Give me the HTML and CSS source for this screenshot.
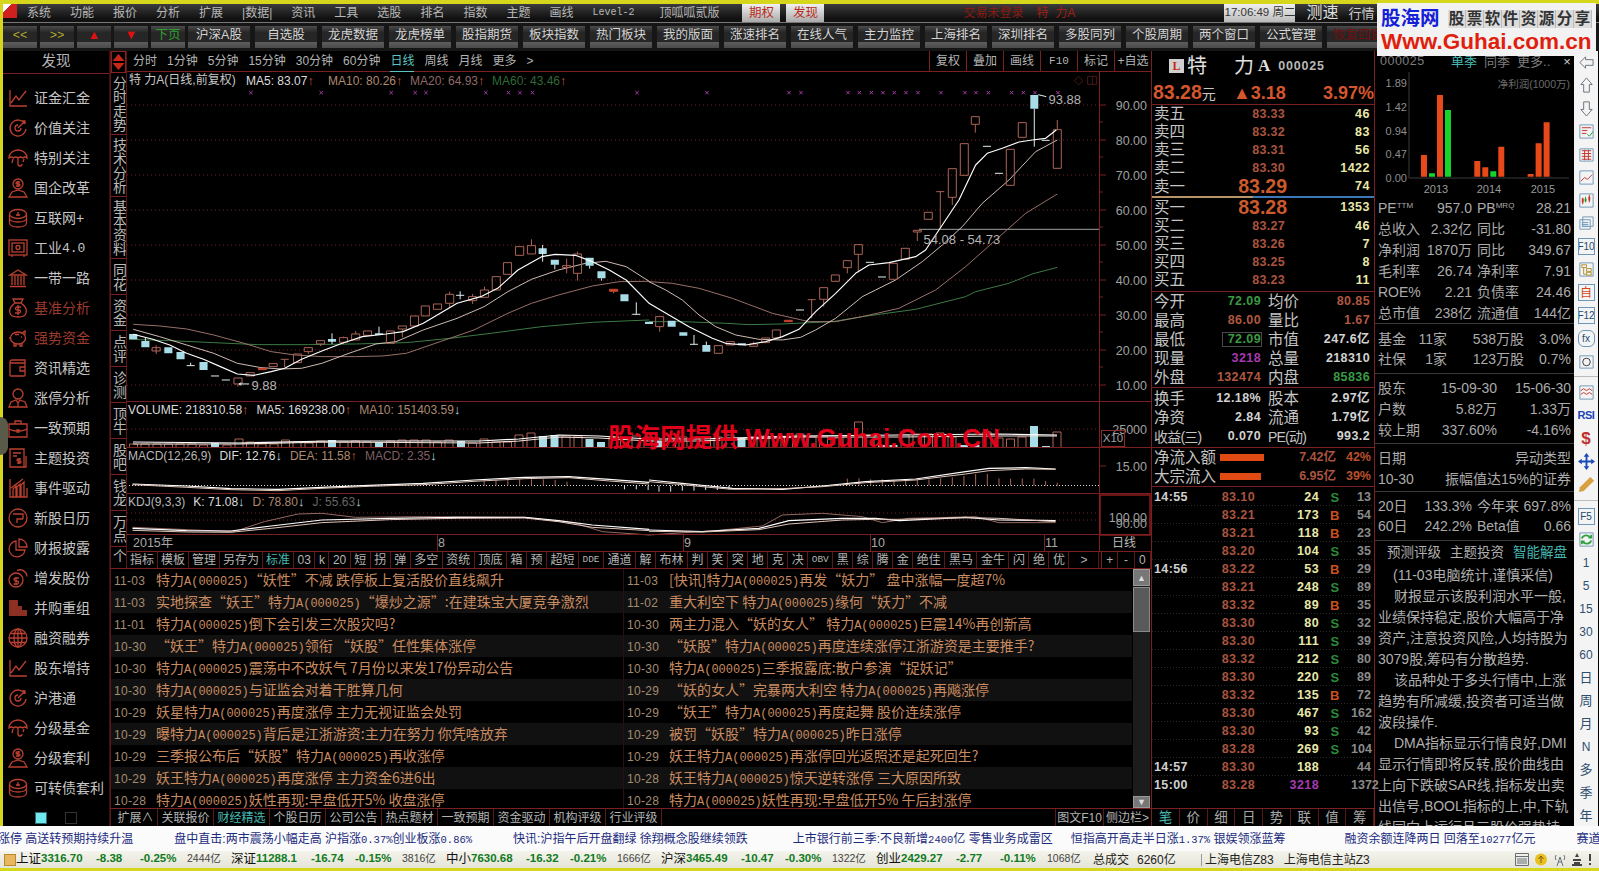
FILE: index.html
```html
<!DOCTYPE html>
<html lang="zh-CN">
<head>
<meta charset="utf-8">
<title>特力A 000025</title>
<link rel="stylesheet" href="styles.css">
</head>
<body>
<svg class="defs" width="0" height="0">
  <symbol id="i-lc" viewBox="0 0 20 20"><path d="M2 2V18H19M3 15L8 8L11 12L18 3"/></symbol>
  <symbol id="i-tg" viewBox="0 0 20 20"><path d="M17 6A8 8 0 1 0 18 11M13 10a3 3 0 1 1-3-3M10 10L17 3M14 3h3v3"/></symbol>
  <symbol id="i-um" viewBox="0 0 20 20"><path d="M1 10a9 8 0 0 1 18 0q-2-2-4.500 0q-2-2-4.500 0q-2-2-4.500 0q-2-2-4.500 0zM10 10v6a2 2 0 0 0 4 0M5 11l-1 4M16 11l-1 3"/></symbol>
  <symbol id="i-pd" viewBox="0 0 20 20"><circle cx="10" cy="6" r="5"/><path d="M1 19l3-5 6-2 6 2 3 5zM8 8h3a1 1 0 0 0 0-2H9a1 1 0 0 1 0-2h3M10 3v6"/></symbol>
  <symbol id="i-co" viewBox="0 0 20 20"><ellipse cx="10" cy="6" rx="8.500" ry="4.500"/><path d="M1.500 6v9c0 2.500 4 4 8.500 4s8.500-1.500 8.500-4V6M1.500 10c0 2.500 4 4 8.500 4s8.500-1.500 8.500-4M8 7h4M10 4v4"/></symbol>
  <symbol id="i-sf" viewBox="0 0 20 20"><rect x="1" y="2" width="18" height="15"/><rect x="4" y="5" width="12" height="9"/><circle cx="10" cy="9.500" r="2"/><path d="M4 17v2M16 17v2"/></symbol>
  <symbol id="i-bk" viewBox="0 0 20 20"><path d="M2 7L10 2L18 7zM4 8v9M7 8v9M10 8v9M13 8v9M16 8v9M2 18.500H18"/></symbol>
  <symbol id="i-bg" viewBox="0 0 20 20"><path d="M7 5L5 1h10l-2 4zM7 5C3 8 1 12 2 15c.5 3 3 4 8 4s7.500-1 8-4c1-3-1-7-5-10zM13 9H9a1.500 1.500 0 0 0 0 3h2a1.500 1.500 0 0 1 0 3H7M10 7v10"/></symbol>
  <symbol id="i-pg" viewBox="0 0 20 20"><ellipse cx="10" cy="10" rx="7.500" ry="6"/><path d="M14 5l3-2v4M2.500 10H1M6 15v3h2v-2M12 16v2h2v-3M13 9h1M7 6.500h4"/></symbol>
  <symbol id="i-wl" viewBox="0 0 20 20"><path d="M2 4a2 2 0 0 1 2-2h13v15a1 1 0 0 1-1 1H3a1 1 0 0 1-1-1zM2 5h15M12 9h5v4h-5z"/></symbol>
  <symbol id="i-pr" viewBox="0 0 20 20"><circle cx="10" cy="6" r="5"/><path d="M1 19l2-5 5-2 2 3 2-3 5 2 2 5zM10 15v4"/></symbol>
  <symbol id="i-bc" viewBox="0 0 20 20"><path d="M1 6h18v13H1zM7 6V3h6v3M1 11c5 3 13 3 18 0M9 12h2v2H9z"/></symbol>
  <symbol id="i-dc" viewBox="0 0 20 20"><path d="M2 1h14v18H2zM5 5h8M5 8h4M18 8v11h-2M13 11h-3a1 1 0 0 0 0 2h2a1 1 0 0 1 0 2H9M11 10v6"/></symbol>
  <symbol id="i-br" viewBox="0 0 20 20"><path d="M2 1V19H19V10M5 19V11l3-3v11M9 19V9l3-3v13M13 19V7l3-3v15M3 10L15 1"/></symbol>
  <symbol id="i-cl" viewBox="0 0 20 20"><circle cx="10" cy="10" r="9"/><path d="M5 6h10v5M15 11H9v4"/></symbol>
  <symbol id="i-pi" viewBox="0 0 20 20"><path d="M8 3a8 8 0 1 0 9 9H8zM11 1a8 8 0 0 1 8 8h-8z"/></symbol>
  <symbol id="i-c2" viewBox="0 0 20 20"><circle cx="8" cy="12" r="7"/><path d="M9 2.500a7 7 0 0 1 10 6M11 10H7.500a1 1 0 0 0 0 3h1.500a1 1 0 0 1 0 3H5.500M8 9v8"/></symbol>
  <symbol id="i-st" viewBox="0 0 20 20"><path d="M1 3h9M1 5h9M1 7h9M1 9h13M1 11h13M1 13h18M1 15h18M1 17h18"/></symbol>
  <symbol id="i-gl" viewBox="0 0 20 20"><circle cx="10" cy="10" r="9"/><ellipse cx="10" cy="10" rx="4" ry="9"/><path d="M1 10h18M2.500 5.500h15M2.500 14.500h15M10 1v18"/></symbol>
</svg>

<div class="topedge"></div>
<div class="framed">
  <header class="menubar">
    <span class="logo"></span>
    <span class="mi">系统</span><span class="mi">功能</span><span class="mi">报价</span><span class="mi">分析</span><span class="mi">扩展</span><span class="mi">|数据|</span><span class="mi">资讯</span><span class="mi">工具</span><span class="mi">选股</span><span class="mi">排名</span><span class="mi">指数</span><span class="mi">主题</span><span class="mi">画线</span><span class="mi mono">Level-2</span><span class="mi wide">顶呱呱贰版</span>
    <span class="mbox first">期权</span><span class="mbox">发现</span>
    <span class="alert">交易未登录</span><span class="alert a2">特&nbsp;&nbsp;力A</span>
    <span class="clock">17:06:49 周二</span><span class="speed">测速</span><span class="hq">行情</span>
  </header>

  <nav class="toolbar">
    <span class="tb tb-s y">&lt;&lt;</span><span class="tb tb-s y">&gt;&gt;</span><span class="tb tb-s red">▲</span><span class="tb tb-s red">▼</span><span class="tb tb-s g">下页</span>
    <span class="tb">沪深A股</span><span class="tb">自选股</span><span class="tb">龙虎数据</span><span class="tb">龙虎榜单</span><span class="tb">股指期货</span><span class="tb">板块指数</span><span class="tb">热门板块</span><span class="tb">我的版面</span><span class="tb">涨速排名</span><span class="tb">在线人气</span><span class="tb">主力监控</span><span class="tb">上海排名</span><span class="tb">深圳排名</span><span class="tb">多股同列</span><span class="tb">个股周期</span><span class="tb">两个窗口</span><span class="tb">公式管理</span><span class="tb dim">恢复四窗</span>
  </nav>

  <main class="main">
    <aside class="sidebar">
      <div class="side-title">发现</div>
      <ul class="side-list">
        <li><svg class="si"><use href="#i-lc"/></svg>证金汇金</li>
        <li><svg class="si"><use href="#i-tg"/></svg>价值关注</li>
        <li><svg class="si"><use href="#i-um"/></svg>特别关注</li>
        <li><svg class="si"><use href="#i-pd"/></svg>国企改革</li>
        <li><svg class="si"><use href="#i-co"/></svg>互联网+</li>
        <li><svg class="si"><use href="#i-sf"/></svg>工业<span class="mono14">4.0</span></li>
        <li><svg class="si"><use href="#i-bk"/></svg>一带一路</li>
        <li class="hot"><svg class="si"><use href="#i-bg"/></svg>基准分析</li>
        <li class="hot"><svg class="si"><use href="#i-pg"/></svg>强势资金</li>
        <li><svg class="si"><use href="#i-wl"/></svg>资讯精选</li>
        <li><svg class="si"><use href="#i-pr"/></svg>涨停分析</li>
        <li><svg class="si"><use href="#i-bc"/></svg>一致预期</li>
        <li><svg class="si"><use href="#i-dc"/></svg>主题投资</li>
        <li><svg class="si"><use href="#i-br"/></svg>事件驱动</li>
        <li><svg class="si"><use href="#i-cl"/></svg>新股日历</li>
        <li><svg class="si"><use href="#i-pi"/></svg>财报披露</li>
        <li><svg class="si"><use href="#i-c2"/></svg>增发股份</li>
        <li><svg class="si"><use href="#i-st"/></svg>并购重组</li>
        <li><svg class="si"><use href="#i-gl"/></svg>融资融券</li>
        <li><svg class="si"><use href="#i-lc"/></svg>股东增持</li>
        <li><svg class="si"><use href="#i-tg"/></svg>沪港通</li>
        <li><svg class="si"><use href="#i-um"/></svg>分级基金</li>
        <li><svg class="si"><use href="#i-pd"/></svg>分级套利</li>
        <li><svg class="si"><use href="#i-co"/></svg>可转债套利</li>
      </ul>
      <div class="side-pages"><span class="pg on"></span><span class="pg"></span></div>
    </aside>

    <section class="work">
      <div class="work-top">
        <div class="vtabs">
          <div class="vt-arrows"><span class="va up"></span><span class="va down"></span></div>
          <div class="vt">分时走势</div><div class="vt">技术分析</div><div class="vt">基本资料</div><div class="vt vt-s">同花</div><div class="vt vt-s">资金</div><div class="vt vt-s">点评</div><div class="vt vt-s">诊测</div><div class="vt vt-s">顶牛</div><div class="vt vt-s">股吧</div><div class="vt vt-s">钱龙</div><div class="vt vt-s">万点</div><div class="vt vt-e">个</div>
        </div>
        <div class="chart">
          <div class="periods">
            <span>分时</span><span>1分钟</span><span>5分钟</span><span>15分钟</span><span>30分钟</span><span>60分钟</span><span class="cur">日线</span><span>周线</span><span>月线</span><span>更多</span><span>&gt;</span>
            <div class="tools"><span>复权</span><span>叠加</span><span>画线</span><span class="f10">F10</span><span>标记</span><span>+自选</span></div>
          </div>
          <div class="canvas">
            <svg class="plot" viewBox="128 72 1024 479" width="1024" height="479">
              <!-- grid & axes -->
              <path class="grid" d="M128 105H1100M128 140H1100M128 175H1100M128 210H1100M128 245H1100M128 280H1100M128 315H1100M128 350H1100M128 385H1100M128 429H1100M128 513H1100M128 520H1100"/>
              <path class="axis" d="M1100.500 72V551M1100 105h7M1100 140h7M1100 175h7M1100 210h7M1100 245h7M1100 280h7M1100 315h7M1100 350h7M1100 385h7M1100 122h4M1100 157h4M1100 192h4M1100 227h4M1100 262h4M1100 297h4M1100 332h4M1100 367h4M1100 466h7"/>
              <g class="ylab">
                <text x="1148" y="110">90.00</text><text x="1148" y="145">80.00</text><text x="1148" y="180">70.00</text><text x="1148" y="215">60.00</text><text x="1148" y="250">50.00</text><text x="1148" y="285">40.00</text><text x="1148" y="320">30.00</text><text x="1148" y="355">20.00</text><text x="1148" y="390">10.00</text>
                <text x="1148" y="434">25000</text><text x="1148" y="471">15.00</text><text x="1148" y="522">100.00</text><text x="1148" y="528">90.00</text>
              </g>
              <rect class="xten" x="1102.500" y="430.500" width="23" height="16"/><text class="xtt" x="1114" y="442">X10</text>
              <rect class="kbox" x="1101" y="495" width="50" height="40"/>

              <!-- left half, reference crop coordinates -->
              <g transform="translate(120 70) scale(.3381 .3333)">
                <path class="ma60" d="M30 808 150 812 280 818 410 824 560 824 700 822 850 818 980 805 1100 790 1250 770 1400 757 1568 750"/>
                <path class="ma20" d="M42 763 120 768 200 777 280 795 370 820 450 845 520 855 600 860 700 860 780 858 850 850 950 815 1050 780 1150 730 1220 700 1300 675 1400 648 1480 635 1568 634"/>
                <path class="ma10" d="M42 778 120 800 200 825 280 850 350 880 420 893 480 897 540 895 600 880 680 850 760 822 820 815 900 780 1000 745 1080 710 1150 665 1220 628 1300 600 1380 580 1440 574 1500 590 1568 634"/>
                <path class="cu" d="M98 833h24V843h-24zM110 826V852M340 924h24V942h-24zM352 942V950M376 908h24V918h-24zM444 881h24V890h-24zM478 868h24M490 868V892M516 852h24V878h-24zM548 833h24V845h-24zM560 845V852M584 812h24V822h-24zM596 822V828M652 803h24V817h-24zM664 800V803M664 817V822M688 792h24V810h-24zM700 783V792M723 783h24V796h-24zM791 783h24V820h-24zM826 768h24V777h-24zM838 777V802M862 738h24V768h-24zM894 708h24V738h-24zM930 702h24V718h-24zM966 673h24V700h-24zM978 665V673M978 700V712M1034 680h24V692h-24zM1046 672V680M1046 692V702M1069 660h24V682h-24zM1081 650V660M1104 620h24V660h-24zM1137 578h24V613h-24zM1173 530h24V556h-24zM1208 527h24V552h-24zM1220 508V527M1312 587h24V593h-24zM1324 566V610M1344 552h24V610h-24zM1356 545V552M1356 610V632M1463 664V670"/>
                <path class="cr" d="M412 895h24V899h-24zM1451 658h24V664h-24z"/>
                <path class="cd" d="M30 792h24V808h-24zM66 813h24V832h-24zM134 832h24V850h-24zM170 846h24V868h-24zM238 876h24V900h-24zM618 807h24V815h-24zM757 790h24V795h-24zM1241 535h24V552h-24zM1277 569h24V584h-24zM1380 563h24V587h-24zM1415 604h24V625h-24zM1483 673h24V694h-24z"/>
                <path class="cw" d="M78 803V813M212 878V887M200 887h24M272 918h24M304 930h24M630 790V822M769 770V795M1009 664V688M997 676h24M1253 525V575M1289 584V598M1392 587V596M1427 625V632M1530 697V733M1518 733h24M355 942h30M355 942l7-4M355 942l7 4"/>
                <path class="ma5" d="M42 793 100 808 150 825 200 850 250 868 300 890 350 912 400 916 450 905 490 895 540 868 600 843 660 820 720 800 790 792 840 785 900 760 950 730 1000 700 1070 680 1120 655 1180 600 1250 560 1290 553 1350 556 1400 575 1450 600 1500 630 1568 700"/>
                <path class="star" d="M385 63l10 10m0-10l-10 10M593 63l10 10m0-10l-10 10M800 63l10 10m0-10l-10 10M871 63l10 10m0-10l-10 10M903 63l10 10m0-10l-10 10M1080 63l10 10m0-10l-10 10M1147 63l10 10m0-10l-10 10M1181 63l10 10m0-10l-10 10M1218 63l10 10m0-10l-10 10M1527 63l10 10m0-10l-10 10"/>
              </g>

              <!-- right half -->
              <g transform="translate(650 70) scale(.3333)">
                <path class="hline" d="M810 478H1350"/>
                <path class="ma60" d="M0 755 100 755 230 760 300 764 400 762 550 755 640 740 800 718 950 680 980 665 1080 640 1150 612 1225 592"/>
                <path class="ma20" d="M0 635 70 640 150 655 250 685 370 730 480 755 560 755 640 740 750 715 860 660 950 590 1040 510 1130 430 1225 372"/>
                <path class="ma10" d="M0 635 50 660 100 690 150 735 200 770 260 795 330 808 400 810 455 802 500 780 560 745 640 680 740 630 820 575 880 525 940 470 1000 400 1080 330 1160 245 1225 210"/>
                <path class="cu" d="M20 740h24V770h-24zM32 770V785M196 827h24V850h-24zM232 815h24V825h-24zM302 822h24V829h-24zM314 815V822M338 804h24V818h-24zM370 780h24V804h-24zM476 689h24M488 689V745M512 653h24V688h-24zM524 688V710M547 615h24V634h-24zM583 572h24V593h-24zM595 593V610M616 524h24V553h-24zM628 553V607M721 580h24V628h-24zM757 535h24V568h-24zM793 481h24V486h-24zM805 486V513M826 427h24V448h-24zM862 365h24M874 365V475M898 296h24V382h-24zM910 382V405M934 221h24V316h-24zM967 140h24V163h-24zM979 163V188M1072 238h24V346h-24zM1108 158h24V202h-24zM1213 179h24V295h-24zM1225 150V179"/>
                <path class="cr" d="M406 751h24V755h-24z"/>
                <path class="cd" d="M-12 755h24V762h-24zM56 752h24V770h-24zM91 787h24V797h-24zM160 825h24V845h-24zM267 820h24V826h-24zM1144 75h24V116h-24z"/>
                <path class="cw" d="M135 795V823M123 823h24M172 815V825M441 720h24M651 577h24M687 621h24M1002 229h24M1038 310h24M1156 116V230M1178 211h24M1168 74l24 6"/>
                <path class="ma5" d="M0 700 60 735 120 770 190 805 230 820 290 825 350 815 400 800 450 778 500 725 560 670 620 610 660 585 720 578 800 560 830 540 880 465 930 390 980 285 1015 250 1060 235 1110 216 1150 210 1190 205 1222 180"/>
                <path class="star" d="M169 63l10 10m0-10l-10 10M415 63l10 10m0-10l-10 10M451 63l10 10m0-10l-10 10M592 63l10 10m0-10l-10 10M626 63l10 10m0-10l-10 10M662 63l10 10m0-10l-10 10M697 63l10 10m0-10l-10 10M731 63l10 10m0-10l-10 10M766 63l10 10m0-10l-10 10M802 63l10 10m0-10l-10 10M871 63l10 10m0-10l-10 10M943 63l10 10m0-10l-10 10M976 63l10 10m0-10l-10 10M1013 63l10 10m0-10l-10 10M1083 63l10 10m0-10l-10 10M1118 63l10 10m0-10l-10 10M1153 63l10 10m0-10l-10 10M1222 63l10 10m0-10l-10 10"/>
                <path class="mk" d="M1276 32l13-13 13 13-13 13zM1316 19h27v24h-27zM1330 19v24"/>
              </g>
              <text class="note" x="1049.500" y="104">93.88</text>
              <text class="note" x="252.500" y="390">9.88</text>
              <text class="note" x="924.500" y="244">54.08 - 54.73</text>

              <!-- volume -->
              <path class="cu" d="M130.500 447v-3h8v3M142 447v-3h8v3M154 447v-3h8v3M165.500 447v-3h8v3M177 447v-3h8v3M189 447v-3h8v3M200.500 447v-2h8v2M224 447v-2h8v2M236 447v-8h8v8M247.500 447v-5h8v5M259 447v-3h8v3M271 447v-3h8v3M282.500 447v-7h8v7M294 447v-5h8v5M306 447v-4h8v4M317.500 447v-6h8v6M341 447v-5h8v5M352.500 447v-6h8v6M364 447v-5h8v5M387.500 447v-6h8v6M399 447v-7h8v7M411 447v-7h8v7M423 447v-7h8v7M434.500 447v-5h8v5M446 447v-7h8v7M469.500 447v-4h8v4M481 447v-8h8v8M493 447v-5h8v5M504.500 447v-5h8v5M516 447v-12h8v12M528 447v-14h8v14M563 447v-11h8v11M575 447v-11h8v11M610 447v-10h8v10M621.500 447v-9h8v9M633 447v-11h8v11M645 447v-10h8v10M668.500 447v-9h8v9M680 447v-10h8v10M692 447v-9h8v9M703.500 447v-9h8v9M715 447v-10h8v10M727 447v-12h8v12M750 447v-10h8v10M762 447v-11h8v11M774 447v-9h8v9M785.500 447v-10h8v10M797 447v-13h8v13M809 447v-10h8v10M820.500 447v-11h8v11M832 447v-9h8v9M844 447v-10h8v10M855.500 447v-25h8v25M867 447v-12h8v12M902 447v-12h8v12M914 447v-13h8v13M925.500 447v-13h8v13M937 447v-14h8v14M949 447v-10h8v10M984 447v-15h8v15M996 447v-9h8v9M1007.500 447v-8h8v8M1019 447v-10h8v10M1054 447v-15h8v15"/>
              <path class="cd" d="M212 447v-4h8v4zM329 447v-7h8v7zM376 447v-5h8v5zM458 447v-6h8v6zM540 447v-11h8v11zM551.500 447v-12h8v12zM586.500 447v-8h8v8zM598 447v-5h8v5zM657 447v-6h8v6zM738.500 447v-9h8v9zM879 447v-2h8v2zM890.500 447v-2h8v2zM961 447v-2h8v2zM972.500 447v-2h8v2zM1031 447v-21h8v21zM1043 447v-1h8v1z"/>
              <path class="vm1" d="M134 444 240 444 330 442 480 443 520 441 560 437 600 438 650 441 700 441 800 437 900 437 1000 436 1058 436"/>
              <path class="vm2" d="M134 442 240 443 330 441 480 441 520 439 560 435 600 436 650 439 700 439 800 436 900 435 1000 434 1058 435"/>

              <!-- MACD -->
              <path class="dots" d="M130 485.500H1100"/>
              <g transform="translate(120 400) scale(.3381 .3333)">
                <path class="tu" d="M1080 257V242M1115 257V240M1150 257V240M1185 257V238M1220 257V238M1255 257V238M1290 257V240M1325 257V245"/>
                <path class="td" d="M1495 257V268M1530 257V268M1565 257V270"/>
                <path class="kl" d="M40 252 200 258 330 266 470 268 600 262 740 256 900 250 1050 240 1200 232 1330 230 1450 238 1568 247"/>
                <path class="kt" d="M40 254 200 262 330 269 470 272 600 265 740 259 900 254 1050 244 1200 236 1330 233 1450 243 1568 252"/>
                <path class="jl" d="M40 382 340 395 430 365 530 342 600 340 700 352 900 350 1200 352 1350 370 1430 395 1568 405"/>
                <path class="kl" d="M40 385 200 392 330 393 450 378 600 360 800 355 1000 352 1200 352 1300 362 1400 375 1568 388"/>
                <path class="kt" d="M40 391 200 396 330 397 450 385 600 368 800 359 1000 355 1200 354 1300 365 1400 382 1568 392"/>
              </g>
              <g transform="translate(650 400) scale(.3333)">
                <path class="tu" d="M595 257V236M630 257V235M665 257V238M700 257V238M735 257V240M770 257V240M805 257V240M840 257V238M875 257V235M910 257V232M945 257V228M980 257V222M1015 257V222M1050 257V235M1085 257V236M1120 257V236M1155 257V236M1190 257V243M1225 257V248"/>
                <path class="td" d="M30 257V275M65 257V275M100 257V272M135 257V272M170 257V270M205 257V270M240 257V268"/>
                <path class="kl" d="M0 240 100 250 180 258 250 265 400 268 520 258 650 245 800 237 950 215 1020 205 1130 203 1220 207"/>
                <path class="kt" d="M0 245 100 254 180 262 250 268 400 266 520 260 650 248 800 240 950 222 1020 212 1130 207 1220 208"/>
                <path class="jl" d="M0 405 200 392 340 378 400 345 520 340 640 350 700 368 780 355 980 350 1050 368 1220 368"/>
                <path class="kl" d="M0 390 160 395 330 385 420 362 580 355 680 355 750 362 950 352 1050 360 1220 362"/>
                <path class="kt" d="M0 394 160 396 330 389 420 372 580 360 680 358 750 358 950 353 1050 355 1220 365"/>
              </g>
              <path class="axis" d="M438.500 535V551M684.500 535V551M871.500 535V551M1045.500 535V551"/>
            </svg>
            <div class="pane pane-main"><div class="leg"><span class="l-name">特&nbsp;力A(日线,前复权)</span><span class="l-ma wt">MA5: 83.07<i class="ar-u">↑</i></span><span class="l-ma c1">MA10: 80.26<i class="ar-u">↑</i></span><span class="l-ma c2">MA20: 64.93<i class="ar-u">↑</i></span><span class="l-ma c3">MA60: 43.46<i class="ar-u">↑</i></span></div></div>
            <div class="pane pane-vol"><div class="leg leg-g"><span class="wt">VOLUME: 218310.58<i class="ar-u">↑</i></span><span class="wt">MA5: 169238.00<i class="ar-u">↑</i></span><span class="c1">MA10: 151403.59<i class="ar-d">↓</i></span></div></div>
            <div class="pane pane-macd"><div class="leg leg-g"><span class="wd">MACD(12,26,9)</span><span class="wt">DIF: 12.76<i class="ar-d">↓</i></span><span class="c1">DEA: 11.58<i class="ar-u">↑</i></span><span class="c4">MACD: 2.35<i class="ar-d">↓</i></span></div></div>
            <div class="pane pane-kdj"><div class="leg leg-g"><span class="wd">KDJ(9,3,3)</span><span class="wt">K: 71.08<i class="ar-d">↓</i></span><span class="c1">D: 78.80<i class="ar-d">↓</i></span><span class="c5">J: 55.63<i class="ar-d">↓</i></span></div></div>
            <div class="dates"><span class="dt d0">2015年</span><span class="dt d1">8</span><span class="dt d2">9</span><span class="dt d3">10</span><span class="dt d4">11</span><span class="dt d5">日线</span></div>
          </div>
          <div class="indbar">
            <span class="nr">指标</span><span class="nr">模板</span><span class="nr">管理</span><span class="nr">另存为</span><span class="nr teal">标准</span><span>03</span><span>k</span><span>20</span><span>短</span><span>拐</span><span>弹</span><span>多空</span><span>资统</span><span>顶底</span><span>箱</span><span>预</span><span>超短</span><span class="ms">DDE</span><span>通道</span><span>解</span><span>布林</span><span>判</span><span>笑</span><span>突</span><span>地</span><span>克</span><span>决</span><span class="ms">OBV</span><span>黑</span><span>综</span><span>腾</span><span>金</span><span>绝佳</span><span>黑马</span><span>金牛</span><span>闪</span><span>绝</span><span>优</span><span class="gt">&gt;</span>
            <div class="pm"><span>+</span><span>-</span><span>0</span></div>
          </div>
        </div>
      </div>

      <div class="news">
        <div class="news-list">
          <div class="nrow"><div class="nc"><b>11-03</b>特力<i>A(000025)</i>“妖性”不减 跌停板上复活股价直线飙升</div><div class="nc"><b>11-03</b>[快讯]特力<i>A(000025)</i>再发“妖力” 盘中涨幅一度超7%</div></div>
          <div class="nrow"><div class="nc"><b>11-03</b>实地探查“妖王”特力<i>A(000025)</i>“爆炒之源”:在建珠宝大厦竞争激烈</div><div class="nc"><b>11-02</b>重大利空下 特力<i>A(000025)</i>缘何“妖力”不减</div></div>
          <div class="nrow"><div class="nc"><b>11-01</b>特力<i>A(000025)</i>倒下会引发三次股灾吗?</div><div class="nc"><b>10-30</b>两主力混入“妖的女人” 特力<i>A(000025)</i>巨震14%再创新高</div></div>
          <div class="nrow"><div class="nc"><b>10-30</b>“妖王”特力<i>A(000025)</i>领衔 “妖股”任性集体涨停</div><div class="nc"><b>10-30</b>“妖股”特力<i>A(000025)</i>再度连续涨停江浙游资是主要推手?</div></div>
          <div class="nrow"><div class="nc"><b>10-30</b>特力<i>A(000025)</i>震荡中不改妖气 7月份以来发17份异动公告</div><div class="nc"><b>10-30</b>特力<i>A(000025)</i>三季报露底:散户参演“捉妖记”</div></div>
          <div class="nrow"><div class="nc"><b>10-30</b>特力<i>A(000025)</i>与证监会对着干胜算几何</div><div class="nc"><b>10-29</b>“妖的女人”完暴两大利空 特力<i>A(000025)</i>再飚涨停</div></div>
          <div class="nrow"><div class="nc"><b>10-29</b>妖星特力<i>A(000025)</i>再度涨停 主力无视证监会处罚</div><div class="nc"><b>10-29</b>“妖王”特力<i>A(000025)</i>再度起舞 股价连续涨停</div></div>
          <div class="nrow"><div class="nc"><b>10-29</b>曝特力<i>A(000025)</i>背后是江浙游资:主力在努力 你凭啥放弃</div><div class="nc"><b>10-29</b>被罚“妖股”特力<i>A(000025)</i>昨日涨停</div></div>
          <div class="nrow"><div class="nc"><b>10-29</b>三季报公布后“妖股”特力<i>A(000025)</i>再收涨停</div><div class="nc"><b>10-29</b>妖王特力<i>A(000025)</i>再涨停回光返照还是起死回生?</div></div>
          <div class="nrow"><div class="nc"><b>10-29</b>妖王特力<i>A(000025)</i>再度涨停 主力资金6进6出</div><div class="nc"><b>10-28</b>妖王特力<i>A(000025)</i>惊天逆转涨停 三大原因所致</div></div>
          <div class="nrow"><div class="nc"><b>10-28</b>特力<i>A(000025)</i>妖性再现:早盘低开5% 收盘涨停</div><div class="nc"><b>10-28</b>特力<i>A(000025)</i>妖性再现:早盘低开5% 午后封涨停</div></div>
        </div>
        <div class="sbar"><span class="sb-btn">▲</span><span class="sb-thumb"></span><span class="sb-btn sb-end">▼</span></div>
      </div>

      <div class="btabs">
        <span>扩展∧</span><span>关联报价</span><span class="teal">财经精选</span><span>个股日历</span><span>公司公告</span><span>热点题材</span><span>一致预期</span><span>资金驱动</span><span>机构评级</span><span>行业评级</span>
        <div class="btabs-r"><span>图文F10</span><span>侧边栏&gt;</span></div>
      </div>
    </section>

    <section class="quote">
      <div class="q-name"><span class="lv">L</span><span class="nm">特</span><span class="nm n2">力</span><span class="nm n3">A</span><span class="code">000025</span></div>
      <div class="q-price"><span class="p1">83.28<em>元</em></span><span class="p2">▲3.18</span><span class="p3">3.97%</span></div>
      <div class="book">
        <div class="br"><span class="lb">卖五</span><span class="pc">83.33</span><span class="vo">46</span></div>
        <div class="br"><span class="lb">卖四</span><span class="pc">83.32</span><span class="vo">83</span></div>
        <div class="br"><span class="lb">卖三</span><span class="pc">83.31</span><span class="vo">56</span></div>
        <div class="br"><span class="lb">卖二</span><span class="pc">83.30</span><span class="vo">1422</span></div>
        <div class="br br-b"><span class="lb">卖一</span><span class="pc big">83.29</span><span class="vo">74</span></div>
        <div class="midline"><span class="ml-a"></span><span class="ml-b"></span></div>
        <div class="br br-b"><span class="lb">买一</span><span class="pc big">83.28</span><span class="vo">1353</span></div>
        <div class="br"><span class="lb">买二</span><span class="pc">83.27</span><span class="vo">46</span></div>
        <div class="br"><span class="lb">买三</span><span class="pc">83.26</span><span class="vo">7</span></div>
        <div class="br"><span class="lb">买四</span><span class="pc">83.25</span><span class="vo">8</span></div>
        <div class="br"><span class="lb">买五</span><span class="pc">83.23</span><span class="vo">11</span></div>
      </div>
      <div class="sblock s1">
        <div class="sr"><span class="lb">今开</span><span class="sv gr">72.09</span><span class="lb l2">均价</span><span class="sv2 rd">80.85</span></div>
        <div class="sr"><span class="lb">最高</span><span class="sv rd">86.00</span><span class="lb l2">量比</span><span class="sv2 rd">1.67</span></div>
        <div class="sr"><span class="lb">最低</span><span class="sv gr boxed">72.09</span><span class="lb l2">市值</span><span class="sv2 wh">247.6亿</span></div>
        <div class="sr"><span class="lb">现量</span><span class="sv pu">3218</span><span class="lb l2">总量</span><span class="sv2 wh">218310</span></div>
        <div class="sr"><span class="lb">外盘</span><span class="sv rd">132474</span><span class="lb l2">内盘</span><span class="sv2 gr">85836</span></div>
      </div>
      <div class="sblock s2">
        <div class="sr"><span class="lb">换手</span><span class="sv wh">12.18%</span><span class="lb l2">股本</span><span class="sv2 wh">2.97亿</span></div>
        <div class="sr"><span class="lb">净资</span><span class="sv wh">2.84</span><span class="lb l2">流通</span><span class="sv2 wh">1.79亿</span></div>
        <div class="sr"><span class="lb nar">收益(三)</span><span class="sv wh sv-s">0.070</span><span class="lb l2 nar">PE(动)</span><span class="sv2 wh">993.2</span></div>
      </div>
      <div class="sblock s3">
        <div class="fl"><span class="lb">净流入额</span><span class="fbar b1"></span><span class="fv">7.42亿</span><span class="fp">42%</span></div>
        <div class="fl"><span class="lb">大宗流入</span><span class="fbar b2"></span><span class="fv">6.95亿</span><span class="fp">39%</span></div>
      </div>
      <div class="trades">
        <div class="tr dot"><span class="tt">14:55</span><span class="tp">83.10</span><span class="tv">24</span><span class="ts s">S</span><span class="tc">13</span></div>
        <div class="tr dot"><span class="tt"></span><span class="tp">83.21</span><span class="tv">173</span><span class="ts b">B</span><span class="tc">54</span></div>
        <div class="tr dot"><span class="tt"></span><span class="tp">83.21</span><span class="tv">118</span><span class="ts b">B</span><span class="tc">23</span></div>
        <div class="tr dot"><span class="tt"></span><span class="tp">83.20</span><span class="tv">104</span><span class="ts s">S</span><span class="tc">35</span></div>
        <div class="tr dot"><span class="tt">14:56</span><span class="tp">83.22</span><span class="tv">53</span><span class="ts b">B</span><span class="tc">29</span></div>
        <div class="tr dot"><span class="tt"></span><span class="tp">83.21</span><span class="tv">248</span><span class="ts s">S</span><span class="tc">89</span></div>
        <div class="tr dot"><span class="tt"></span><span class="tp">83.32</span><span class="tv">89</span><span class="ts b">B</span><span class="tc">35</span></div>
        <div class="tr dot"><span class="tt"></span><span class="tp">83.30</span><span class="tv">80</span><span class="ts s">S</span><span class="tc">32</span></div>
        <div class="tr dot"><span class="tt"></span><span class="tp">83.30</span><span class="tv">111</span><span class="ts s">S</span><span class="tc">39</span></div>
        <div class="tr dot"><span class="tt"></span><span class="tp">83.32</span><span class="tv">212</span><span class="ts s">S</span><span class="tc">80</span></div>
        <div class="tr dot"><span class="tt"></span><span class="tp">83.30</span><span class="tv">220</span><span class="ts s">S</span><span class="tc">89</span></div>
        <div class="tr dot"><span class="tt"></span><span class="tp">83.32</span><span class="tv">135</span><span class="ts b">B</span><span class="tc">72</span></div>
        <div class="tr dot"><span class="tt"></span><span class="tp">83.30</span><span class="tv">467</span><span class="ts s">S</span><span class="tc">162</span></div>
        <div class="tr dot"><span class="tt"></span><span class="tp">83.30</span><span class="tv">93</span><span class="ts s">S</span><span class="tc">42</span></div>
        <div class="tr dot"><span class="tt"></span><span class="tp">83.28</span><span class="tv">269</span><span class="ts s">S</span><span class="tc">104</span></div>
        <div class="tr dot"><span class="tt">14:57</span><span class="tp">83.30</span><span class="tv">188</span><span class="ts"></span><span class="tc">44</span></div>
        <div class="tr"><span class="tt">15:00</span><span class="tp">83.28</span><span class="tv pu">3218</span><span class="ts"></span><span class="tc">1372</span></div>
      </div>
      <div class="qtabs"><span class="teal">笔</span><span>价</span><span>细</span><span>日</span><span>势</span><span>联</span><span>值</span><span>筹</span></div>
    </section>

    <section class="f10">
      <div class="f-head"><span class="f-code">000025</span><span class="teal">单季</span><span>同季</span><span>更多..</span><span class="f-x">×</span></div>
      <svg class="bars" viewBox="1376 72 199 125" width="199" height="125">
        <path class="baxis" d="M1410 72V178H1570"/>
        <g class="blab"><text x="1408" y="87">1.89</text><text x="1408" y="111">1.42</text><text x="1408" y="135">0.94</text><text x="1408" y="158">0.47</text><text x="1408" y="182">0.00</text></g>
        <text class="bunit" x="1571" y="88">净利润(1000万)</text>
        <g class="byear"><text x="1437" y="193">2013</text><text x="1490" y="193">2014</text><text x="1544" y="193">2015</text></g>
        <g transform="translate(1150 0) scale(.3333)">
          <path class="bo" d="M816 465h18V530h-18zM864 285h18V530h-18zM976 483h18V530h-18zM1000 502h18V530h-18zM1048 440h18V530h-18zM1136 522h18V530h-18zM1160 430h18V530h-18zM1184 367h18V530h-18z"/>
          <path class="bg" d="M840 520h18V530h-18zM888 330h18V530h-18zM1024 514h18V530h-18z"/>
        </g>
      </svg>
      <div class="fs f1">
        <div class="fr"><span class="fa"><span>PE<sup>TTM</sup></span><span>957.0</span></span><span class="fb">PB<sup>MRQ</sup></span><span class="fz">28.21</span></div>
        <div class="fr"><span class="fa"><span>总收入</span><span>2.32亿</span></span><span class="fb">同比</span><span class="fz">-31.80</span></div>
        <div class="fr"><span class="fa"><span>净利润</span><span>1870万</span></span><span class="fb">同比</span><span class="fz">349.67</span></div>
        <div class="fr"><span class="fa"><span>毛利率</span><span>26.74</span></span><span class="fb">净利率</span><span class="fz">7.91</span></div>
        <div class="fr"><span class="fa"><span>ROE%</span><span>2.21</span></span><span class="fb">负债率</span><span class="fz">24.46</span></div>
        <div class="fr"><span class="fa"><span>总市值</span><span>238亿</span></span><span class="fb">流通值</span><span class="fz">144亿</span></div>
      </div>
      <div class="fs f2">
        <div class="fr fr20"><span class="c-a">基金</span><span class="c-b">11家</span><span class="c-c">538万股</span><span class="fz">3.0%</span></div>
        <div class="fr fr20"><span class="c-a">社保</span><span class="c-b">1家</span><span class="c-c">123万股</span><span class="fz">0.7%</span></div>
      </div>
      <div class="fs f3">
        <div class="fr"><span class="c-a">股东</span><span class="c-d">15-09-30</span><span class="fz">15-06-30</span></div>
        <div class="fr"><span class="c-a">户数</span><span class="c-d">5.82万</span><span class="fz">1.33万</span></div>
        <div class="fr"><span class="c-a">较上期</span><span class="c-d">337.60%</span><span class="fz">-4.16%</span></div>
      </div>
      <div class="fs f4">
        <div class="fr"><span class="c-a">日期</span><span class="fz">异动类型</span></div>
        <div class="fr"><span class="c-a">10-30</span><span class="fz">振幅值达15%的证券</span></div>
      </div>
      <div class="fs f5">
        <div class="fr fr20"><span class="fa"><span>20日</span><span>133.3%</span></span><span class="fb">今年来</span><span class="fz">697.8%</span></div>
        <div class="fr fr20"><span class="fa"><span>60日</span><span>242.2%</span></span><span class="fb">Beta值</span><span class="fz">0.66</span></div>
      </div>
      <div class="f-tabs"><span>预测评级</span><span>主题投资</span><span class="teal">智能解盘</span></div>
      <div class="para">
        <p class="ctr">(11-03电脑统计,谨慎采信)</p>
        <p><span class="ind"></span>财报显示该股利润水平一般,业绩保持稳定,股价大幅高于净资产,注意投资风险,人均持股为3079股,筹码有分散趋势.</p>
        <p><span class="ind"></span>该品种处于多头行情中,上涨趋势有所减缓,投资者可适当做波段操作.</p>
        <p><span class="ind"></span>DMA指标显示行情良好,DMI显示行情即将反转,股价曲线由上向下跌破SAR线,指标发出卖出信号,BOOL指标的上,中,下轨线同向上运行且三股价强势持续</p>
      </div>
    </section>

    <aside class="strip">
      <span class="ic"><svg viewBox="0 0 18 18"><path class="s-g" d="M8 3L2 9l6 6v-3h8V6H8z"/></svg></span>
      <span class="ic"><svg viewBox="0 0 18 18"><path class="s-g" d="M9 1L3 8h3v8h6V8h3z"/></svg></span>
      <span class="ic"><svg viewBox="0 0 18 18"><path class="s-g" d="M9 17L3 10h3V2h6v8h3z"/></svg></span>
      <span class="ic"><svg viewBox="0 0 18 18"><path class="s-b" d="M2 2h14v14H2z"/><path class="s-r" d="M4 5h10M4 8h6M4 11h5"/><path class="s-gn" d="M10 12l2 2 4-5"/></svg></span>
      <span class="ic"><svg viewBox="0 0 18 18"><path class="s-b" d="M2 3h14v13H2z"/><path class="s-r" d="M4 5h10M4 8h10M4 11h10M4 14h10M7 4v11M11 4v11"/></svg></span>
      <span class="ic"><svg viewBox="0 0 18 18"><path class="s-b" d="M2 2h14v14H2z"/><path class="s-r" d="M3 13l4-4 3 2 5-5"/></svg></span>
      <span class="ic"><svg viewBox="0 0 18 18"><path class="s-b" d="M2 2h14v14H2z"/><path class="s-r" d="M5 6v7M12 3v8"/><path class="s-gn" d="M8 5v6"/><path class="f-r" d="M4 7h2v4H4zM11 5h2v4h-2z"/><path class="f-g" d="M7 7h2v3H7z"/></svg></span>
      <span class="ic"><svg viewBox="0 0 18 18"><path class="s-b" d="M5 2h11v10H5zM2 5h11v10H2zM4 8h7M4 10h7M4 12h7"/></svg></span>
      <span class="ic box">F10</span>
      <span class="ic"><svg viewBox="0 0 18 18"><path class="s-b" d="M2 2h14v14H2z"/><path class="s-o" d="M4 4h5v3H4zM9 8h5v3H9zM9 12h5v3H9zM6 7v7h3"/></svg></span>
      <span class="ic box red">自</span>
      <span class="ic box">F12</span>
      <span class="ic box round">fx</span>
      <span class="ic"><svg viewBox="0 0 18 18"><path class="s-b" d="M2 3h14v13H2z"/><circle class="s-k" cx="9" cy="9.500" r="4"/></svg></span>
      <span class="sep"></span>
      <span class="ic"><svg viewBox="0 0 18 18"><path class="s-b" d="M2 2h14v14H2z"/><path class="s-r" d="M3 7l3-2 3 2 3-2 3 2M3 11l3-2 3 2 3-2 3 2"/></svg></span>
      <span class="ic rsi">RSI</span>
      <span class="ic dollar">$</span>
      <span class="ic"><svg viewBox="0 0 18 18"><path class="f-bl" d="M9 0l3 4h-2v4h4V6l4 3-4 3v-2h-4v4h2l-3 4-3-4h2v-4H4v2L0 9l4-3v2h4V4H6z"/></svg></span>
      <span class="ic"><svg viewBox="0 0 18 18"><path class="f-or" d="M2 12L13 1l4 4L6 16l-5 1z"/></svg></span>
      <span class="sep sep2"></span>
      <span class="ic box">F5</span>
      <span class="ic"><svg viewBox="0 0 18 18"><path class="s-b" d="M2 2h14v14H2z"/><path class="s-gn2" d="M4 8a5 5 0 0 1 9-1M14 10a5 5 0 0 1-9 1M11 7h3V4M7 11H4v3"/></svg></span>
      <span class="ic num">1</span><span class="ic num">5</span><span class="ic num">15</span><span class="ic num">30</span><span class="ic num">60</span><span class="ic num cj">日</span><span class="ic num cj">周</span><span class="ic num cj">月</span><span class="ic num">N</span><span class="ic num cj">多</span><span class="ic num cj">季</span><span class="ic num cj">年</span>
    </aside>
  </main>
</div>

<div class="ticker">
  <span>涨停 高送转预期持续升温</span><span>盘中直击:两市震荡小幅走高 沪指涨<u>0.37%</u>创业板涨<u>0.86%</u></span><span class="tk3">快讯:沪指午后开盘翻绿 徐翔概念股继续领跌</span><span class="tk4">上市银行前三季:不良新增<u>2400</u>亿 零售业务成雷区</span><span>恒指高开高走半日涨<u>1.37%</u> 银娱领涨蓝筹</span><span class="tk6">融资余额连降两日 回落至<u>10277</u>亿元</span><span>赛道</span>
</div>
<footer class="status">
  <span class="st-ic"></span>
  <div class="ix"><span class="n">上证</span><span class="a">3316.70</span><span class="b">-8.38</span><span class="c">-0.25%</span><span class="d">2444亿</span></div>
  <div class="ix"><span class="n">深证</span><span class="a">11288.1</span><span class="b">-16.74</span><span class="c">-0.15%</span><span class="d">3816亿</span></div>
  <div class="ix"><span class="n">中小</span><span class="a">7630.68</span><span class="b">-16.32</span><span class="c">-0.21%</span><span class="d">1666亿</span></div>
  <div class="ix"><span class="n">沪深</span><span class="a">3465.49</span><span class="b">-10.47</span><span class="c">-0.30%</span><span class="d">1322亿</span></div>
  <div class="ix"><span class="n">创业</span><span class="a">2429.27</span><span class="b">-2.77</span><span class="c">-0.11%</span><span class="d">1068亿</span></div>
  <div class="tot">总成交<span>6260亿</span></div>
  <div class="srv">上海电信Z83</div><div class="srv">上海电信主站Z3</div>
  <div class="st-icons">
    <svg viewBox="0 0 14 13" width="14" height="13"><path class="s-g" d="M.5.500h13v12H.5zM.5 3.500h13M2 6h10M2 8h10M2 10h10"/></svg>
    <svg viewBox="0 0 14 13" width="14" height="13"><circle class="f-y" cx="7" cy="6.500" r="6"/><path class="s-br" d="M7 3v7M4.500 6L7 3l2.500 3"/></svg>
    <svg viewBox="0 0 14 13" width="14" height="13"><path class="s-g" d="M7 4l-3 9M7 4l3 9M5 9h4M3 2a5 5 0 0 0 0 5M11 2a5 5 0 0 1 0 5"/></svg>
    <svg viewBox="0 0 10 13" width="10" height="13"><path class="f-d" d="M5 0l2 4H3zM1 6h8v2H1zM2 9h6v2H2zM0 11h10v2H0z"/></svg>
    <svg viewBox="0 0 6 13" width="6" height="13"><path class="f-d" d="M2 1h2v7H2zM2 10h2v2H2z"/></svg>
  </div>
</footer>

<div class="handle"></div>
<div class="watermark">股海网提供 Www.Guhai.Com.CN</div>
<div class="banner">
  <div class="bn-top"><span class="bn-name">股海网</span><span class="bn-sub"><span>股</span><span>票</span><span>软</span><span>件</span><span>资</span><span>源</span><span>分</span><span>享</span></span></div>
  <div class="bn-url">Www.Guhai.com.cn</div>
</div>
<div class="edge-bottom"></div>
</body>
</html>
```

FILE: styles.css
```css
*{box-sizing:border-box;margin:0;padding:0}
html,body{width:1599px;height:871px;overflow:hidden;background:#000}
body{position:relative;font-family:"Liberation Sans","Noto Sans CJK SC",sans-serif;font-size:12px;color:#bbb;line-height:1}
i,em{font-style:normal}
.defs{position:absolute}
.teal{color:#46b8b0!important}

.topedge{height:4px;background:#d6d61c}
.framed{border-left:3px solid #d6d61c;height:822px;display:flex;flex-direction:column}

/* menu */
.menubar{height:18px;display:flex;align-items:center;background:linear-gradient(#3c3c3c,#111 80%);padding-left:24px;position:relative;white-space:nowrap}
.logo{position:absolute;left:0;top:0;width:14px;height:14px;background:linear-gradient(135deg,#fff 30%,#d02020 32%)}
.mi{margin-right:19px;color:#b8b8b8;font-size:12px}
.mono{font-family:"Liberation Mono",monospace;font-size:10px}
.mono14{font-family:"Liberation Mono",monospace;font-size:13px}
.wide{margin-left:6px;margin-right:23px}
.mbox{width:38px;height:18px;margin-right:6px;background:linear-gradient(#f0f0f0,#aaa);color:#b82c20;display:flex;align-items:center;justify-content:center;font-size:12.500px}
.alert{color:#8c1a12;font-size:12px;margin-left:133px}
.a2{margin-left:13px;width:46px;color:#a02018}
.clock{margin-left:142px;width:71px;height:18px;background:linear-gradient(#eee,#bbb);color:#333;display:flex;align-items:center;justify-content:center;font-size:11.500px}
.speed{margin-left:7px;width:40px;text-align:center;font-size:16px;color:#ddd}
.hq{margin-left:6px;font-size:13px;color:#ccc}

/* toolbar */
.toolbar{height:29px;display:flex;gap:3px;padding-top:3px;background:#161616;border-top:1px solid #777;white-space:nowrap;overflow:hidden}
.tb{width:62px;height:22px;margin-right:2px;flex:none;background:linear-gradient(#4a4a4a 0,#262626 30%,#262626 72%,#5c5c5c 74%,#4a4a4a);color:#d4d4d4;display:flex;align-items:center;justify-content:center;font-size:12.500px;padding-bottom:3px}
.tb-s{width:34px;margin-right:0}
.y{color:#b0a830}.red{color:#e01010}.g{color:#30a030}.dim{color:#701010}

/* main */
.main{display:flex;height:775px;background:#000}
.sidebar{width:107px;flex:none;display:flex;flex-direction:column;border-right:1px solid #3a1010}
.side-title{height:23px;border-bottom:1px solid #7a2020;text-align:center;font-size:14.500px;line-height:21px;color:#b4b4b4}
.side-list{list-style:none;padding-top:9px}
.side-list li{height:30px;display:flex;align-items:center;font-size:14px;color:#c6c6c6;padding-left:5px;white-space:nowrap}
.si{width:20px;height:20px;margin-right:6px;flex:none;fill:none;stroke:#bc4030;stroke-width:1.300}
.hot{color:#9c3a2c!important}
.side-pages{display:flex;gap:18px;padding:9px 0 0 32px}
.pg{width:12px;height:12px;border:1px solid #333}
.pg.on{background:#6fe8f0;border:1px solid #2a6a70}

.work{width:1041px;flex:none;display:flex;flex-direction:column}
.work-top{display:flex;height:517px}
.vtabs{width:17px;flex:none;border:1px solid #5a1818;border-top:0;border-bottom:0;display:flex;flex-direction:column;overflow:hidden}
.vt-arrows{height:22px;flex:none;border:1px solid #8a2020;display:flex;flex-direction:column;align-items:center;justify-content:center;gap:2px}
.va{width:12px;height:7px;flex:none;border:0;background:#c8281a}
.va.up{clip-path:polygon(50% 0,100% 100%,0 100%)}
.va.down{clip-path:polygon(0 0,100% 0,50% 100%)}
.vt{height:62px;flex:none;writing-mode:vertical-rl;text-orientation:upright;display:flex;align-items:center;justify-content:center;font-size:14px;line-height:15px;color:#b8b8b8;border-bottom:1px solid #7a2020}
.vt-s{height:36px}
.vt-e{flex:1;height:auto;justify-content:flex-start;padding-top:2px;overflow:hidden;border-bottom:0}

.chart{width:1024px;flex:none;display:flex;flex-direction:column}
.periods{height:21px;display:flex;align-items:center;gap:10px;padding-left:6px;border-bottom:1px solid #7a2020;color:#b4b4b4;font-size:12px;white-space:nowrap}
.periods .cur{color:#5cc4c0;align-self:stretch;display:flex;align-items:center;border-bottom:1px solid #5cc4c0;height:21px}
.tools{margin-left:auto;display:flex;height:100%}
.tools span{width:37px;border-left:1px solid #7a2020;display:flex;align-items:center;justify-content:center;color:#b4b4b4}
.tools .f10{font-family:"Liberation Mono",monospace;font-size:11px}

.canvas{position:relative;height:479px;display:flex;flex-direction:column}
.plot{position:absolute;left:0;top:0;display:block}
.plot path{fill:none;vector-effect:non-scaling-stroke}
.grid{stroke:#6e2020;stroke-dasharray:1 3}
.axis{stroke:#7a2020}
.ylab text{fill:#a0a0a0;font-size:12.500px;text-anchor:end}
.xten{fill:none;stroke:#8a2a2a}
.xtt{fill:#a0a0a0;font-size:11.500px;text-anchor:middle}
.kbox{fill:none;stroke:#8c1c1c;stroke-width:1.500}
.plot .cu{stroke:#ab6456}
.plot .cr{stroke:#c8452c;fill:#c8452c}
.plot .cd{fill:#a8dce6}
.plot .cw{stroke:#dfeeee}
.plot .ma5{stroke:#fff;stroke-width:1.150;stroke-linejoin:round}
.plot .ma10{stroke:#e4cfc6;stroke-width:.9}
.plot .ma20{stroke:#a87c74;stroke-width:.9}
.plot .ma60{stroke:#3c7a44}
.plot .star{stroke:#a53aa5}
.plot .mk{stroke:#4a1818}
.plot .hline{stroke:#a0a0a0}
.note{fill:#b4b4b4;font-size:13px;text-anchor:start}
.plot .vm1{stroke:#f0e0d8;stroke-width:1.200}
.plot .vm2{stroke:#fff;stroke-width:1.200}
.plot .dots{stroke:#d8d8d8;stroke-dasharray:1 2}
.plot .tu{stroke:#a86656}
.plot .td{stroke:#d8eeee}
.plot .kl{stroke:#fff;stroke-width:1.200}
.plot .kt{stroke:#e0c4b8}
.plot .jl{stroke:#946860}

.pane{position:relative;border-bottom:1px solid #7a2020;flex:none}
.pane-main{height:330px}
.pane-vol,.pane-macd{height:46px}
.pane-kdj{height:41px}
.leg{height:16px;display:flex;align-items:center;font-size:12px;padding-left:2px;color:#ccc;white-space:nowrap;position:relative}
.leg i{font-size:13px}
.leg-g{gap:8px;padding-left:1px;height:15px}
.l-name{width:117px;color:#c8c8c8}
.l-ma{width:82px}
.wt{color:#dcdcdc}.wd{color:#b8b8b8}.c1{color:#ae8a70}.c2{color:#8f6a66}.c3{color:#2f6a36}.c4{color:#7f5f64}.c5{color:#666}
.ar-u{color:#c8583a}.ar-d{color:#b4dce6}

.dates{height:16px;position:relative;flex:none;font-size:12.500px;color:#a8a8a8}
.dt{position:absolute;top:2px}
.d0{left:6px}.d1{left:311px}.d2{left:557px}.d3{left:744px}.d4{left:918px}.d5{left:985px;color:#b8b8b8;font-size:12px}

.indbar{height:17px;display:flex;border-top:1px solid #7a2020;align-items:center;font-size:12px;color:#b4b4b4;white-space:nowrap;padding-left:0}
.indbar>span{padding:0 3.500px;border-right:1px solid #5a1818;height:16px;display:flex;align-items:center;flex:none}
.indbar>.nr{padding:0 3px}
.indbar .ms{font-family:"Liberation Mono",monospace;font-size:9.500px}
.indbar .gt{width:30px;justify-content:center}
.pm{margin-left:auto;display:flex;height:100%;width:50px;border-left:1px solid #7a2020}
.pm span{flex:1;text-align:center;border-right:1px solid #5a1818;line-height:16px}

/* news */
.news{height:240px;display:flex;border-top:1px solid #7a2020;border-left:1px solid #5a1818}
.news-list{width:1021px;flex:none}
.nrow{height:22px;display:flex;font-size:14px;font-family:"Noto Sans CJK SC","Liberation Sans",sans-serif;white-space:nowrap;overflow:hidden}
.nrow:nth-child(even){background:#111}
.nc{width:513px;flex:none;padding-left:3px;color:#c98b60;line-height:21px;overflow:hidden}
.nc:first-child{border-right:1px solid #2a1010}
.nc b{font-weight:400;font-size:12px;font-family:"Liberation Sans",sans-serif;color:#a48c72;letter-spacing:.300px;display:inline-block;width:42px}
.nc i{font-family:"Liberation Mono",monospace;font-size:12px}
.sbar{width:17px;margin-left:1px;flex:none;background:#1c1c1c;display:flex;flex-direction:column;gap:1px}
.sb-btn{height:17px;background:#777;color:#ddd;font-size:9px;text-align:center;line-height:16px;border:1px solid #999}
.sb-thumb{height:45px;background:#5a5a5a;border:1px solid #8a8a8a}
.sb-end{margin-top:auto;height:12px;line-height:10px}

.btabs{height:18px;display:flex;border-top:1px solid #7a2020;border-left:1px solid #5a1818;font-size:12px;color:#b4b4b4;padding-left:3px;white-space:nowrap;align-items:stretch}
.btabs>span{padding:0 4px;border-right:1px solid #5a1818;display:flex;align-items:center;width:56px;justify-content:center}
.btabs>span:first-child{width:44px}
.btabs-r{margin-left:auto;display:flex}
.btabs-r span{width:48px;display:flex;align-items:center;justify-content:center;border-left:1px solid #5a1818}

/* quote */
.quote{width:224px;flex:none;border-left:1px solid #7a2020;border-right:1px solid #7a2020;display:flex;flex-direction:column;position:relative}
.q-name{height:30px;display:flex;align-items:center;position:relative;padding-left:17px}
.lv{width:15px;height:14px;background:#cfcfcf;color:#c82a20;font:700 12px "Liberation Serif",serif;text-align:center;line-height:14px;margin-right:3px}
.nm{font-size:20px;color:#e0e0e0}
.n2{margin-left:27px}
.n3{margin-left:4px;font:700 17px "Liberation Serif",serif}
.code{margin-left:8px;font-weight:700;font-size:12.500px;letter-spacing:.800px;color:#b8b8b8}
.q-price{height:24px;display:flex;align-items:center;font-weight:700;font-size:19.500px;color:#d4562c;border-bottom:1px solid #7a2020;white-space:nowrap;padding-left:1px}
.p1{width:80px}.p1 em{font-weight:400;font-size:14px;color:#c8c8c8}
.p2{width:87px;font-size:18px}
.p3{flex:1;text-align:right;font-size:18px}
.book{height:187px;border-bottom:1px solid #7a2020}
.br{height:18px;display:flex;align-items:center;padding:0 4px 0 2px}
.br-b{height:19px}
.lb{font-size:15.500px;color:#c4c4c4;white-space:nowrap}
.pc{width:100px;text-align:right;font-weight:700;font-size:12.500px;letter-spacing:.300px;color:#a9543f}
.big{font-size:19.500px;color:#cc5a2c;letter-spacing:0;width:102px}
.vo{flex:1;text-align:right;font-weight:700;font-size:12.500px;letter-spacing:.500px;color:#e8e8a8}
.midline{height:2px;display:flex}
.ml-a{width:101px;background:#b8946a}.ml-b{flex:1;background:#3a78b8}
.sblock{border-bottom:1px solid #7a2020}
.s1{height:96px}
.s2{height:60px;padding-top:1px}
.s3{height:39px}
.sr{height:19px;display:flex;align-items:center;padding:0 4px 0 2px}
.sv{width:76px;text-align:right;font-weight:700;font-size:12.500px;letter-spacing:.400px;flex:none}
.sr .lb:first-child{width:31px;flex:none;overflow:visible}
.l2{margin-left:7px;width:34px;flex:none}
.nar{font-size:14px;letter-spacing:-.800px}
.sr .sv-s{width:76px}
.sv2{flex:1;text-align:right;font-weight:700;font-size:12.500px;letter-spacing:.400px;white-space:nowrap}
.gr{color:#3a9a42}.rd{color:#b05840}.wh{color:#d2d2d2}.pu{color:#a63ab0}
.sr .boxed{outline:1px solid #4a4a4a;width:38px;margin-left:38px}
.fl{height:19px;display:flex;align-items:center;padding:0 3px 0 2px;position:relative}
.fbar{height:7px;background:#e24a14;margin-left:4px;flex:none}
.b1{width:44px}.b2{width:41px}
.fv{flex:1;text-align:right;color:#a9543f;font-weight:700;font-size:12.500px}
.fp{width:35px;text-align:right;color:#b8502c;font-weight:700;font-size:12.500px}
.trades{flex:1;padding-top:1px}
.tr{height:18px;display:flex;align-items:center;font-weight:700;font-size:12.500px;letter-spacing:.400px;padding:0 3px 0 2px}
.dot{background:repeating-linear-gradient(90deg,#2a2a2a 0 1px,transparent 1px 3px) bottom/100% 1px no-repeat}
.tt{width:45px;color:#d0d0d0;flex:none}
.tp{width:56px;text-align:right;color:#a9543f;flex:none}
.tv{width:64px;text-align:right;color:#e8e8a8;flex:none}
.tv.pu{color:#a63ab0}
.ts{width:32px;text-align:center;font-size:13px;flex:none}
.ts.s{color:#2c8a3a}.ts.b{color:#c8501e}
.tc{flex:1;text-align:right;color:#8a8a8a;white-space:nowrap;letter-spacing:0}
.qtabs{height:18px;display:flex;border-top:1px solid #7a2020;flex:none}
.qtabs span{width:28px;border-right:1px solid #5a1818;text-align:center;font-size:13.500px;line-height:17px;color:#a8a8a8}

/* f10 */
.f10{width:199px;flex:none;display:flex;flex-direction:column;overflow:hidden;color:#aaa}
.f-head{height:21px;display:flex;align-items:center;gap:7px;padding-left:5px;font-size:13px;color:#7e7e7e;white-space:nowrap}
.f-code{width:64px;font-size:12.500px;letter-spacing:.500px}
.f-x{color:#ccc;margin-left:6px}
.bars{display:block;flex:none}
.baxis{fill:none;stroke:#3a3a3a}
.blab text{fill:#8e8e8e;font-size:11px;text-anchor:end}
.bunit{fill:#6c6c6c;font-size:10.500px;text-anchor:end}
.byear text{fill:#9a9a9a;font-size:11px;text-anchor:middle}
.bo{fill:#e8491a}.bg{fill:#16d428}
.fs{border-bottom:1px solid #3a3a3a;padding:0 3px;flex:none}
.f1{height:127px}
.f2{height:50px;padding-top:5px}
.f3{height:70px;padding-top:3px}
.f4{height:48px;padding-top:3px}
.f5{height:49px;padding-top:4px}
.fr{height:21px;display:flex;align-items:center;font-size:14px;color:#ababab;white-space:nowrap}
.fr20{height:20px}
.fa{width:94px;display:flex;justify-content:space-between;flex:none}
.fb{margin-left:5px}
.fz{margin-left:auto}
.fr sup{font-size:8px;vertical-align:5px;line-height:0}
.c-a{width:40px;flex:none}
.c-b{width:29px;text-align:right;flex:none}
.c-c{width:77px;text-align:right;flex:none}
.c-d{width:79px;text-align:right;flex:none}
.f-tabs{height:22px;display:flex;gap:9px;padding:2px 0 0 12px;font-size:13.500px;line-height:20px;color:#b0b0b0;white-space:nowrap;flex:none}
.para{padding:2px 3px 0;font-size:14px;line-height:21px;color:#afafaf;flex:1;overflow:hidden;word-break:break-all}
.ctr{padding-left:15px;white-space:nowrap}
.ind{display:inline-block;width:16px}

/* strip */
.strip{width:24px;flex:none;background:#f4f4f4;display:flex;flex-direction:column;align-items:center;overflow:hidden;position:relative}
.ic{height:23px;width:24px;flex:none;display:flex;align-items:center;justify-content:center;font-size:11px;color:#2a4a7a}
.ic svg{width:17px;height:17px}
.ic svg path,.ic svg circle{fill:none}
.box{font-size:10px;color:#234a70;position:relative}
.box::after{content:"";position:absolute;left:4px;right:3px;top:3px;bottom:3px;border:1px solid #6f98b8}
.box.red{color:#d04a18;font-size:12px}
.box.round::after{border-radius:6px}
.s-g{stroke:#66707a}.s-b{stroke:#6f98b8}.s-r{stroke:#c03028}.s-gn{stroke:#209a30}.s-o{stroke:#b09028}.s-k{stroke:#333}.s-gn2{stroke:#30a040;stroke-width:2}
.ic svg .f-r{fill:#d03028}.ic svg .f-g{fill:#209a30}.ic svg .f-bl{fill:#1a4ab8}.ic svg .f-or{fill:#d8a040}
.sep{height:8px;width:24px;flex:none;border-bottom:1px solid #bbb;margin-top:-4px;margin-bottom:4px}
.sep2{height:9px}
.rsi{color:#1a44b8;font-weight:700;font-size:11px;letter-spacing:-.500px}
.dollar{color:#c03030;font-weight:700;font-size:17px}
.num{font-size:12px;color:#2f4f6f}
.cj{font-size:13px}

/* ticker + status */
.ticker{height:25px;background:#fbfbfb;display:flex;align-items:center;gap:41px;padding-left:0;text-indent:-2px;font-size:12px;color:#1a2a7c;white-space:nowrap;overflow:hidden;padding-top:1px}
.ticker u{text-decoration:none;font-size:10.500px;font-family:"Liberation Mono",monospace}
.ticker span{text-indent:0}
.ticker span:first-child{margin-left:-2px}
.tk3{margin-right:4px}
.tk4{margin-right:-23px}
.tk6{margin-left:18px}
.status{height:17px;display:flex;align-items:center;background:linear-gradient(#f4f4ec,#e4e4d8);color:#222;white-space:nowrap;padding-left:4px;font-size:12px;position:relative}
.st-ic{width:12px;height:12px;background:#e8b860;border:1px solid #b88a30;flex:none}
.ix{width:215px;flex:none;display:flex}
.ix .n{width:25px;font-size:12.500px;color:#111}
.ix .a{width:55px;color:#0f7a22;font-weight:700;font-size:11.500px}
.ix .b{width:44px;color:#0f7a22;font-weight:700;font-size:11.500px}
.ix .c{width:47px;color:#0f7a22;font-weight:700;font-size:11.500px}
.ix .d{width:44px;font-size:10.500px;color:#444}
.tot{margin-left:2px;width:108px;color:#222}
.tot span{margin-left:8px;font-size:12px}
.srv{margin-right:7px;padding-left:3px;color:#222}
.tot + .srv{border-left:1px solid #999}
.st-icons{position:absolute;left:1515px;top:2px;display:flex;gap:5px;align-items:center}
.st-icons path,.st-icons circle{fill:none}
.st-icons .f-y{fill:#e8c020}.st-icons .s-br{stroke:#7a5a10}.st-icons .f-d{fill:#444}

.edge-bottom{height:3px;background:#d6d61c}
.handle{position:absolute;left:0;top:417px;width:8px;height:38px;background:#5a5a4a;border-radius:0 8px 8px 0}
.watermark{position:absolute;left:608px;top:423px;font-weight:700;font-size:26px;line-height:30px;color:#e2001a;white-space:nowrap}
.banner{position:absolute;left:1377px;top:3px;width:219px;height:53px;background:#f2f2f2;padding:4px 4px 0}
.bn-top{display:flex;align-items:center;height:23px}
.bn-name{color:#1420d8;font-weight:700;font-size:19.500px;margin-right:9px;width:58px;white-space:nowrap}
.bn-sub{display:flex;background:#dcdcdc;height:18px}
.bn-sub span{width:18px;font-size:15.500px;font-weight:700;color:#333;text-align:center;line-height:18px;border-right:1px solid #bbb}
.bn-url{color:#e0200c;font-weight:700;font-size:22.500px;line-height:24px;white-space:nowrap}
```
